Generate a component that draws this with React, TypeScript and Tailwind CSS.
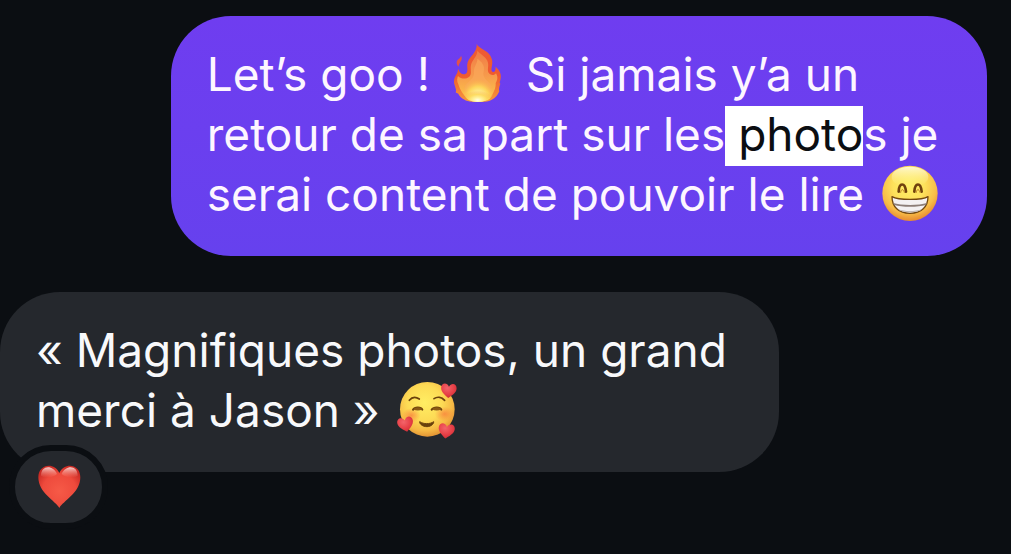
import type { ReactNode } from "react";
import { clsx } from "clsx";

interface EmojiProps {
  label: string;
  viewBox: string;
  className?: string;
  children: ReactNode;
}

function Emoji({ label, viewBox, className, children }: EmojiProps) {
  return (
    <svg
      role="img"
      aria-label={label}
      viewBox={viewBox}
      className={clsx("inline-block overflow-visible", className ?? "mx-1 size-[58px] align-[-11px]")}
    >
      {children}
    </svg>
  );
}

function Fire() {
  return (
    <Emoji label="fire" viewBox="33 33 174 174" className="mx-1.5 size-[58px] align-[-11px]">
      <defs>
        <linearGradient id="fire-outer" x1="0" y1="0" x2="0" y2="1">
          <stop offset="0" stopColor="#ee5a35" />
          <stop offset="0.55" stopColor="#ef5b2e" />
          <stop offset="1" stopColor="#f79a3c" />
        </linearGradient>
        <linearGradient id="fire-mid" x1="0" y1="0" x2="0" y2="1">
          <stop offset="0" stopColor="#f07a45" />
          <stop offset="0.5" stopColor="#f69a4c" />
          <stop offset="1" stopColor="#fdc848" />
        </linearGradient>
        <radialGradient id="fire-core" cx="0.5" cy="0.88" r="0.62">
          <stop offset="0" stopColor="#fffef0" />
          <stop offset="0.25" stopColor="#fff3a0" />
          <stop offset="0.6" stopColor="#fdd95a" stopOpacity="0.9" />
          <stop offset="1" stopColor="#f9a94a" stopOpacity="0" />
        </radialGradient>
      </defs>
      <path
        d="M116 32C120 44 137 48 148 58C161 70 165 84 162 97C160 107 159 114 164 117C171 118 173 111 173 101C183 110 191 122 188 136C187 145 183 149 187 152C183 163 182 169 184 175C179 188 169 199 153 204C139 208 103 208 89 204C74 199 64 190 61 182C57 181 55 180 53 178C56 174 53 166 50 157C45 142 51 131 56 123C60 118 58 113 61 108C65 119 70 124 77 124C87 124 89 116 88 105C86 92 90 82 98 72C109 59 118 47 116 32Z"
        fill="url(#fire-outer)"
      />
      <path d="M69 68C75 78 68 84 65 91C62 95 63 99 61 101C56 95 54 88 58 82C62 77 68 75 69 68Z" fill="#e2524a" />
      <path
        d="M118 53C125 62 142 70 148 83C154 97 147 107 151 118C156 128 169 129 174 121C181 133 178 142 173 150C174 163 168 184 150 197C139 203 105 204 92 197C74 187 66 169 61 154C56 144 57 136 60 129C70 139 84 139 94 131C103 123 96 109 99 96C102 80 117 72 118 53Z"
        fill="url(#fire-mid)"
      />
      <path
        d="M118 77C119 91 106 102 108 117C109 134 98 142 88 150C76 160 78 177 87 190C98 206 139 207 153 191C164 177 163 160 155 150C146 141 133 133 137 116C141 99 133 87 118 77Z"
        fill="#fba95a"
        opacity="0.65"
      />
      <path
        d="M117 112C118 130 106 140 90 151C72 166 71 184 88 198C103 209 139 209 155 198C169 186 168 169 157 154C146 142 129 132 117 112Z"
        fill="url(#fire-core)"
      />
      <ellipse cx="119" cy="184" rx="39" ry="23" fill="url(#fire-core)" />
    </Emoji>
  );
}

function Grin() {
  return (
    <Emoji label="beaming face" viewBox="27 30 174 174">
      <defs>
        <radialGradient id="grin-face" cx="0.48" cy="0.36" r="0.64">
          <stop offset="0" stopColor="#fff168" />
          <stop offset="0.45" stopColor="#fde15b" />
          <stop offset="0.78" stopColor="#f8bd48" />
          <stop offset="1" stopColor="#e78a30" />
        </radialGradient>
        <linearGradient id="grin-shine" x1="0" y1="0" x2="0" y2="1">
          <stop offset="0" stopColor="#fffbe0" stopOpacity="0.9" />
          <stop offset="1" stopColor="#fff383" stopOpacity="0" />
        </linearGradient>
      </defs>
      <circle cx="114" cy="118" r="83" fill="url(#grin-face)" />
      <ellipse cx="114" cy="69" rx="55" ry="31" fill="url(#grin-shine)" />
      <g fill="none" strokeLinecap="round">
        <path d="M80 113C81 85 99 84 102 113" stroke="#70420d" strokeWidth="8" />
        <path d="M127 113C129 85 146 84 149 113" stroke="#70420d" strokeWidth="8" />
        <path d="M86 115C87 104 95 104 97 115M133 115C134 104 141 104 144 115" stroke="#ba7b26" strokeWidth="3" />
      </g>
      <path
        d="M60 128C79 139 150 139 168 128C168 158 148 178 114 178C80 178 60 158 60 128Z"
        fill="#f4f1f2"
        stroke="#73480f"
        strokeWidth="4"
        strokeLinejoin="round"
      />
      <path d="M63 147C88 155 141 155 165 147L162 153C138 160 90 160 66 153Z" fill="#8d7e78" />
      <path d="M78 166C99 173 129 173 150 166C139 178 90 178 78 166Z" fill="#bfb6b4" />
    </Emoji>
  );
}

function LoveFace() {
  const heart = "M0 20C-8 13-22 4-22-8C-22-22-6-25 0-12C6-25 22-22 22-8C22 4 8 13 0 20Z";

  return (
    <Emoji label="smiling face with hearts" viewBox="33 33 174 174">
      <defs>
        <radialGradient id="love-face" cx="0.45" cy="0.38" r="0.64">
          <stop offset="0" stopColor="#ffee63" />
          <stop offset="0.5" stopColor="#fddb55" />
          <stop offset="0.8" stopColor="#f6b944" />
          <stop offset="1" stopColor="#e08f32" />
        </radialGradient>
        <radialGradient id="love-blush">
          <stop offset="0" stopColor="#f87e3c" stopOpacity="0.75" />
          <stop offset="1" stopColor="#f87e3c" stopOpacity="0" />
        </radialGradient>
        <radialGradient id="love-heart" cx="0.4" cy="0.3" r="0.75">
          <stop offset="0" stopColor="#f3646a" />
          <stop offset="0.6" stopColor="#e73f46" />
          <stop offset="1" stopColor="#c92b34" />
        </radialGradient>
      </defs>
      <circle cx="124" cy="121" r="82" fill="url(#love-face)" />
      <ellipse cx="176" cy="135" rx="30" ry="22" fill="url(#love-blush)" />
      <ellipse cx="76" cy="139" rx="28" ry="22" fill="url(#love-blush)" />
      <g fill="none" stroke="#6b410b" strokeLinecap="round">
        <path d="M70 94C77 85 88 82 100 90" strokeWidth="5" />
        <path d="M144 89C154 82 167 84 176 94" strokeWidth="5" />
        <path d="M81 122C86 113 105 113 109 122M137 122C143 113 162 113 166 122" strokeWidth="6" />
      </g>
      <path d="M82 121C88 113 104 113 109 121C101 126 90 126 82 121ZM138 121C144 113 160 113 166 121C157 126 147 126 138 121Z" fill="#8a5914" />
      <path d="M101 158C113 166 132 166 143 158C144 163 136 173 123 173C109 173 100 164 101 158Z" fill="#69400c" stroke="#69400c" strokeWidth="3" strokeLinejoin="round" />
      <g fill="url(#love-heart)">
        <path transform="translate(188 66) rotate(4) scale(1.06)" d={heart} />
        <path transform="translate(59 167) rotate(-12) scale(1.08)" d={heart} />
        <path transform="translate(181 187) rotate(8) scale(1.1)" d={heart} />
      </g>
    </Emoji>
  );
}

function Heart() {
  return (
    <Emoji label="red heart" viewBox="109 106 132 132" className="size-11">
      <defs>
        <radialGradient id="heart-fill" cx="0.5" cy="0.6" r="0.62">
          <stop offset="0" stopColor="#f65a47" />
          <stop offset="0.65" stopColor="#ee4a3c" />
          <stop offset="1" stopColor="#c92a24" />
        </radialGradient>
        <linearGradient id="heart-shine" x1="0" y1="0" x2="0" y2="1">
          <stop offset="0" stopColor="#ffe0dc" stopOpacity="0.9" />
          <stop offset="1" stopColor="#ff9c8e" stopOpacity="0" />
        </linearGradient>
      </defs>
      <path
        d="M176 235C165 214 113 190 113 143C113 102 161 96 176 130C191 96 239 102 239 143C239 190 187 214 176 235Z"
        fill="url(#heart-fill)"
      />
      <path d="M121 138C121 107 156 104 169 133C159 143 133 148 121 138ZM231 138C231 107 196 104 183 133C193 143 219 148 231 138Z" fill="url(#heart-shine)" />
    </Emoji>
  );
}

function Bubble({ sent, children }: { sent?: boolean; children: ReactNode }) {
  return (
    <div
      className={clsx(
        "relative w-fit rounded-[60px] pb-8 pl-9 pt-7 text-[46px] leading-[60px]",
        sent
          ? "ml-auto bg-linear-to-b from-[#6f3df0] to-[#6641ee] pr-11 text-[#fdf6ff]"
          : "bg-[#25282d] pr-[52px] text-[#f8f9fb]"
      )}
    >
      {children}
    </div>
  );
}

export default function App() {
  return (
    <main className="flex min-h-screen flex-col gap-9 bg-[#0b0e12] pt-4 font-['Inter',sans-serif]">
      <div className="pr-6">
        <Bubble sent>
          <p>
            Let’s goo ! <Fire /> Si jamais y’a un
            <br />
            retour de sa part sur les
            <mark className="bg-white pb-1 text-[#0b0e12]"> photo</mark>s je
            <br />
            serai content de pouvoir le lire <Grin />
          </p>
        </Bubble>
      </div>
      <div>
        <Bubble>
          <p>
            « Magnifiques photos, un grand
            <br />
            merci à Jason » <LoveFace />
          </p>
          <button
            type="button"
            aria-label="Reactions"
            className="absolute -bottom-[57px] left-[9px] flex h-[84px] w-[99px] items-center justify-center rounded-full border-6 border-[#0b0e12] bg-[#25282d]"
          >
            <Heart />
          </button>
        </Bubble>
      </div>
    </main>
  );
}
